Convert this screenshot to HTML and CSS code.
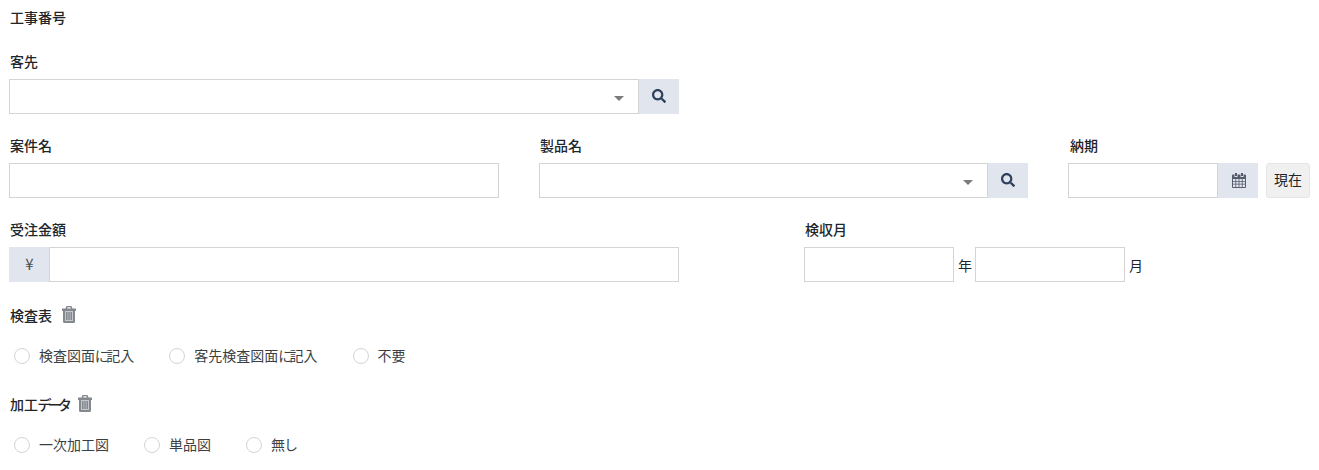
FILE: index.html
```html
<!DOCTYPE html>
<html lang="ja">
<head>
<meta charset="utf-8">
<title>工事番号</title>
<link rel="stylesheet" href="styles.css">
</head>
<body>
<form class="form">
  <div class="row row-id"><label class="label">工事番号</label></div>

  <div class="row">
    <div class="field w-670">
      <label class="label">客先</label>
      <div class="group">
        <div class="select"><span class="caret"></span></div>
        <span class="addon addon-btn"><svg class="icon-search" viewBox="0 0 512 512"><path d="M505 442.7L405.3 343c-4.5-4.5-10.6-7-17-7H372c27.6-35.3 44-79.7 44-128C416 93.1 322.9 0 208 0S0 93.1 0 208s93.1 208 208 208c48.3 0 92.7-16.4 128-44v16.3c0 6.4 2.5 12.5 7 17l99.7 99.7c9.4 9.4 24.6 9.4 33.9 0l28.3-28.3c9.4-9.4 9.4-24.6.1-34zM208 336c-70.7 0-128-57.2-128-128 0-70.7 57.2-128 128-128 70.7 0 128 57.2 128 128 0 70.7-57.2 128-128 128z"/></svg></span>
      </div>
    </div>
  </div>

  <div class="row gap-40">
    <div class="field w-490">
      <label class="label">案件名</label>
      <input class="input" type="text">
    </div>
    <div class="field w-489">
      <label class="label">製品名</label>
      <div class="group">
        <div class="select"><span class="caret"></span></div>
        <span class="addon addon-btn"><svg class="icon-search" viewBox="0 0 512 512"><path d="M505 442.7L405.3 343c-4.5-4.5-10.6-7-17-7H372c27.6-35.3 44-79.7 44-128C416 93.1 322.9 0 208 0S0 93.1 0 208s93.1 208 208 208c48.3 0 92.7-16.4 128-44v16.3c0 6.4 2.5 12.5 7 17l99.7 99.7c9.4 9.4 24.6 9.4 33.9 0l28.3-28.3c9.4-9.4 9.4-24.6.1-34zM208 336c-70.7 0-128-57.2-128-128 0-70.7 57.2-128 128-128 70.7 0 128 57.2 128 128 0 70.7-57.2 128-128 128z"/></svg></span>
      </div>
    </div>
    <div class="field w-242">
      <label class="label label-date">納期</label>
      <div class="date-line">
        <div class="group date-group">
          <input class="input" type="text">
          <span class="addon addon-btn"><svg class="icon-cal" viewBox="0 0 14 15"><path d="M3 0h2v3H3zM9 0h2v3H9z"/><path fill-rule="evenodd" d="M1 1.500h1.500V4h3V1.500h3V4h3V1.500H13a1 1 0 0 1 1 1V14a1 1 0 0 1-1 1H1a1 1 0 0 1-1-1V2.500a1 1 0 0 1 1-1zM1 6v2h2.400V6zm3.200 0v2h2.400V6zm3.200 0v2h2.400V6zm3.200 0v2H13V6zM1 8.800v2h2.400v-2zm3.200 0v2h2.400v-2zm3.200 0v2h2.400v-2zm3.200 0v2H13v-2zM1 11.600V14h2.400v-2.400zm3.200 0V14h2.400v-2.400zm3.200 0V14h2.400v-2.400zm3.200 0V14H13v-2.400z"/></svg></span>
        </div>
        <button class="now" type="button">現在</button>
      </div>
    </div>
  </div>

  <div class="row gap-125 row-amount">
    <div class="field w-670">
      <label class="label">受注金額</label>
      <div class="group">
        <span class="addon addon-yen">¥</span>
        <input class="input" type="text">
      </div>
    </div>
    <div class="field">
      <label class="label">検収月</label>
      <div class="ym">
        <input class="input ym-input" type="text"><span class="unit">年</span>
        <input class="input ym-input" type="text"><span class="unit">月</span>
      </div>
    </div>
  </div>

  <div class="section">
    <div class="section-head">
      <label class="label">検査表</label>
      <svg class="icon-trash" viewBox="0 0 14 17"><path class="trash-in" d="M2 5h10v11H2z"/><path d="M4.500 0h5l1 2.500H14V5H0V2.500h3.500zM5.600 1.300l-.4 1.200h3.600l-.4-1.200zM1 5h2v10h8V5h2v10.500a1.500 1.500 0 0 1-1.500 1.500h-9A1.500 1.500 0 0 1 1 15.500zM4 6h1.500v8H4zm2.300 0h1.400v8H6.300zm2.200 0H10v8H8.500z"/></svg>
    </div>
    <div class="radios">
      <label class="radio"><span class="dot"></span><span>検査図面<span class="kana">に</span>記入</span></label>
      <label class="radio"><span class="dot"></span><span>客先検査図面<span class="kana">に</span>記入</span></label>
      <label class="radio"><span class="dot"></span><span>不要</span></label>
    </div>
  </div>

  <div class="section">
    <div class="section-head">
      <label class="label">加工<span class="kana-label">データ</span></label>
      <svg class="icon-trash" viewBox="0 0 14 17"><path class="trash-in" d="M2 5h10v11H2z"/><path d="M4.500 0h5l1 2.500H14V5H0V2.500h3.500zM5.600 1.300l-.4 1.200h3.600l-.4-1.200zM1 5h2v10h8V5h2v10.500a1.500 1.500 0 0 1-1.500 1.500h-9A1.500 1.500 0 0 1 1 15.500zM4 6h1.500v8H4zm2.300 0h1.400v8H6.300zm2.200 0H10v8H8.500z"/></svg>
    </div>
    <div class="radios">
      <label class="radio"><span class="dot"></span><span>一次加工図</span></label>
      <label class="radio"><span class="dot"></span><span>単品図</span></label>
      <label class="radio"><span class="dot"></span><span>無<span class="kana">し</span></span></label>
    </div>
  </div>
</form>
</body>
</html>
```

FILE: styles.css
```css
* { box-sizing: border-box; }
html, body { margin: 0; padding: 0; background: #fff; }
body {
  font-family: "Noto Sans CJK JP", "Noto Sans", sans-serif;
  font-size: 14px;
  font-feature-settings: "palt";
  color: #212529;
  height: 470px;
  overflow: hidden;
}
.form { padding: 8px 9px 0; }
.row { display: flex; margin-bottom: 22px; }
.row-id { margin-bottom: 24px; }
.row-amount { margin-bottom: 24px; }
.gap-40 { gap: 40px; }
.gap-125 { gap: 125px; }
.w-670 { width: 670px; }
.w-490 { width: 490px; }
.w-489 { width: 489px; }
.w-242 { width: 242px; }
.label {
  display: block;
  height: 20px;
  line-height: 18px;
  font-size: 14px;
  font-weight: 500;
  padding-left: 1px;
}
.label-date { padding-left: 2px; }
.kana { letter-spacing: -2.2px; }
.kana-label { letter-spacing: -3.2px; }
.field .label { margin-bottom: 7px; }
.group { display: flex; height: 35px; }
.input {
  display: block;
  width: 100%;
  height: 35px;
  border: 1px solid #d4d4d4;
  background: #fff;
  padding: 0 8px;
  outline: none;
  border-radius: 0;
  font: inherit;
  min-width: 0;
}
.select {
  flex: 1;
  position: relative;
  border: 1px solid #d4d4d4;
  background: #fff;
}
.caret {
  position: absolute;
  right: 14px;
  top: 16px;
  width: 0;
  height: 0;
  border-left: 5px solid transparent;
  border-right: 5px solid transparent;
  border-top: 5px solid #7b7b7b;
}
.addon {
  display: flex;
  align-items: center;
  justify-content: center;
  flex: none;
  background: #e1e5ee;
}
.addon-btn { width: 40px; }
.addon-yen {
  width: 41px;
  border: 1px solid #e1e5ee;
  margin-right: -1px;
  color: #495057;
  font-size: 15px;
  line-height: 30px;
  padding-bottom: 2px;
}
.icon-search { width: 14px; height: 14px; fill: #2f405c; margin-top: -1px; }
.icon-cal { width: 14px; height: 15px; fill: #565d6c; margin-left: 1px; margin-top: -1px; }
.date-line { display: flex; gap: 8px; }
.date-group { width: 190px; }
.now {
  width: 44px;
  height: 35px;
  padding: 0 0 3px;
  border: 1px solid #e6e6e6;
  border-radius: 3px;
  background: #f0f0f0;
  color: #212529;
  font: inherit;
  font-size: 14px;
}
.ym { display: flex; align-items: center; height: 35px; }
.ym-input { width: 150px; }
.unit { width: 21px; padding: 2px 0 0 4px; line-height: 33px; flex: none; }
.section-head { display: flex; align-items: center; gap: 9px; height: 20px; }
.icon-trash { width: 14px; height: 17px; fill: #85888d; margin-top: -3px; margin-left: 1px; }
.trash-in { fill: #c4c8cf; }
.radios { display: flex; gap: 35px; height: 69px; padding-top: 20px; padding-left: 5px; }
.radio { display: flex; align-items: flex-start; height: 20px; line-height: 18px; color: #3b3f44; }
.dot {
  width: 16px;
  height: 16px;
  border: 1px solid #d4d4d4;
  border-radius: 50%;
  background: #fff;
  margin: 2px 9px 0 0;
  flex: none;
}
```
